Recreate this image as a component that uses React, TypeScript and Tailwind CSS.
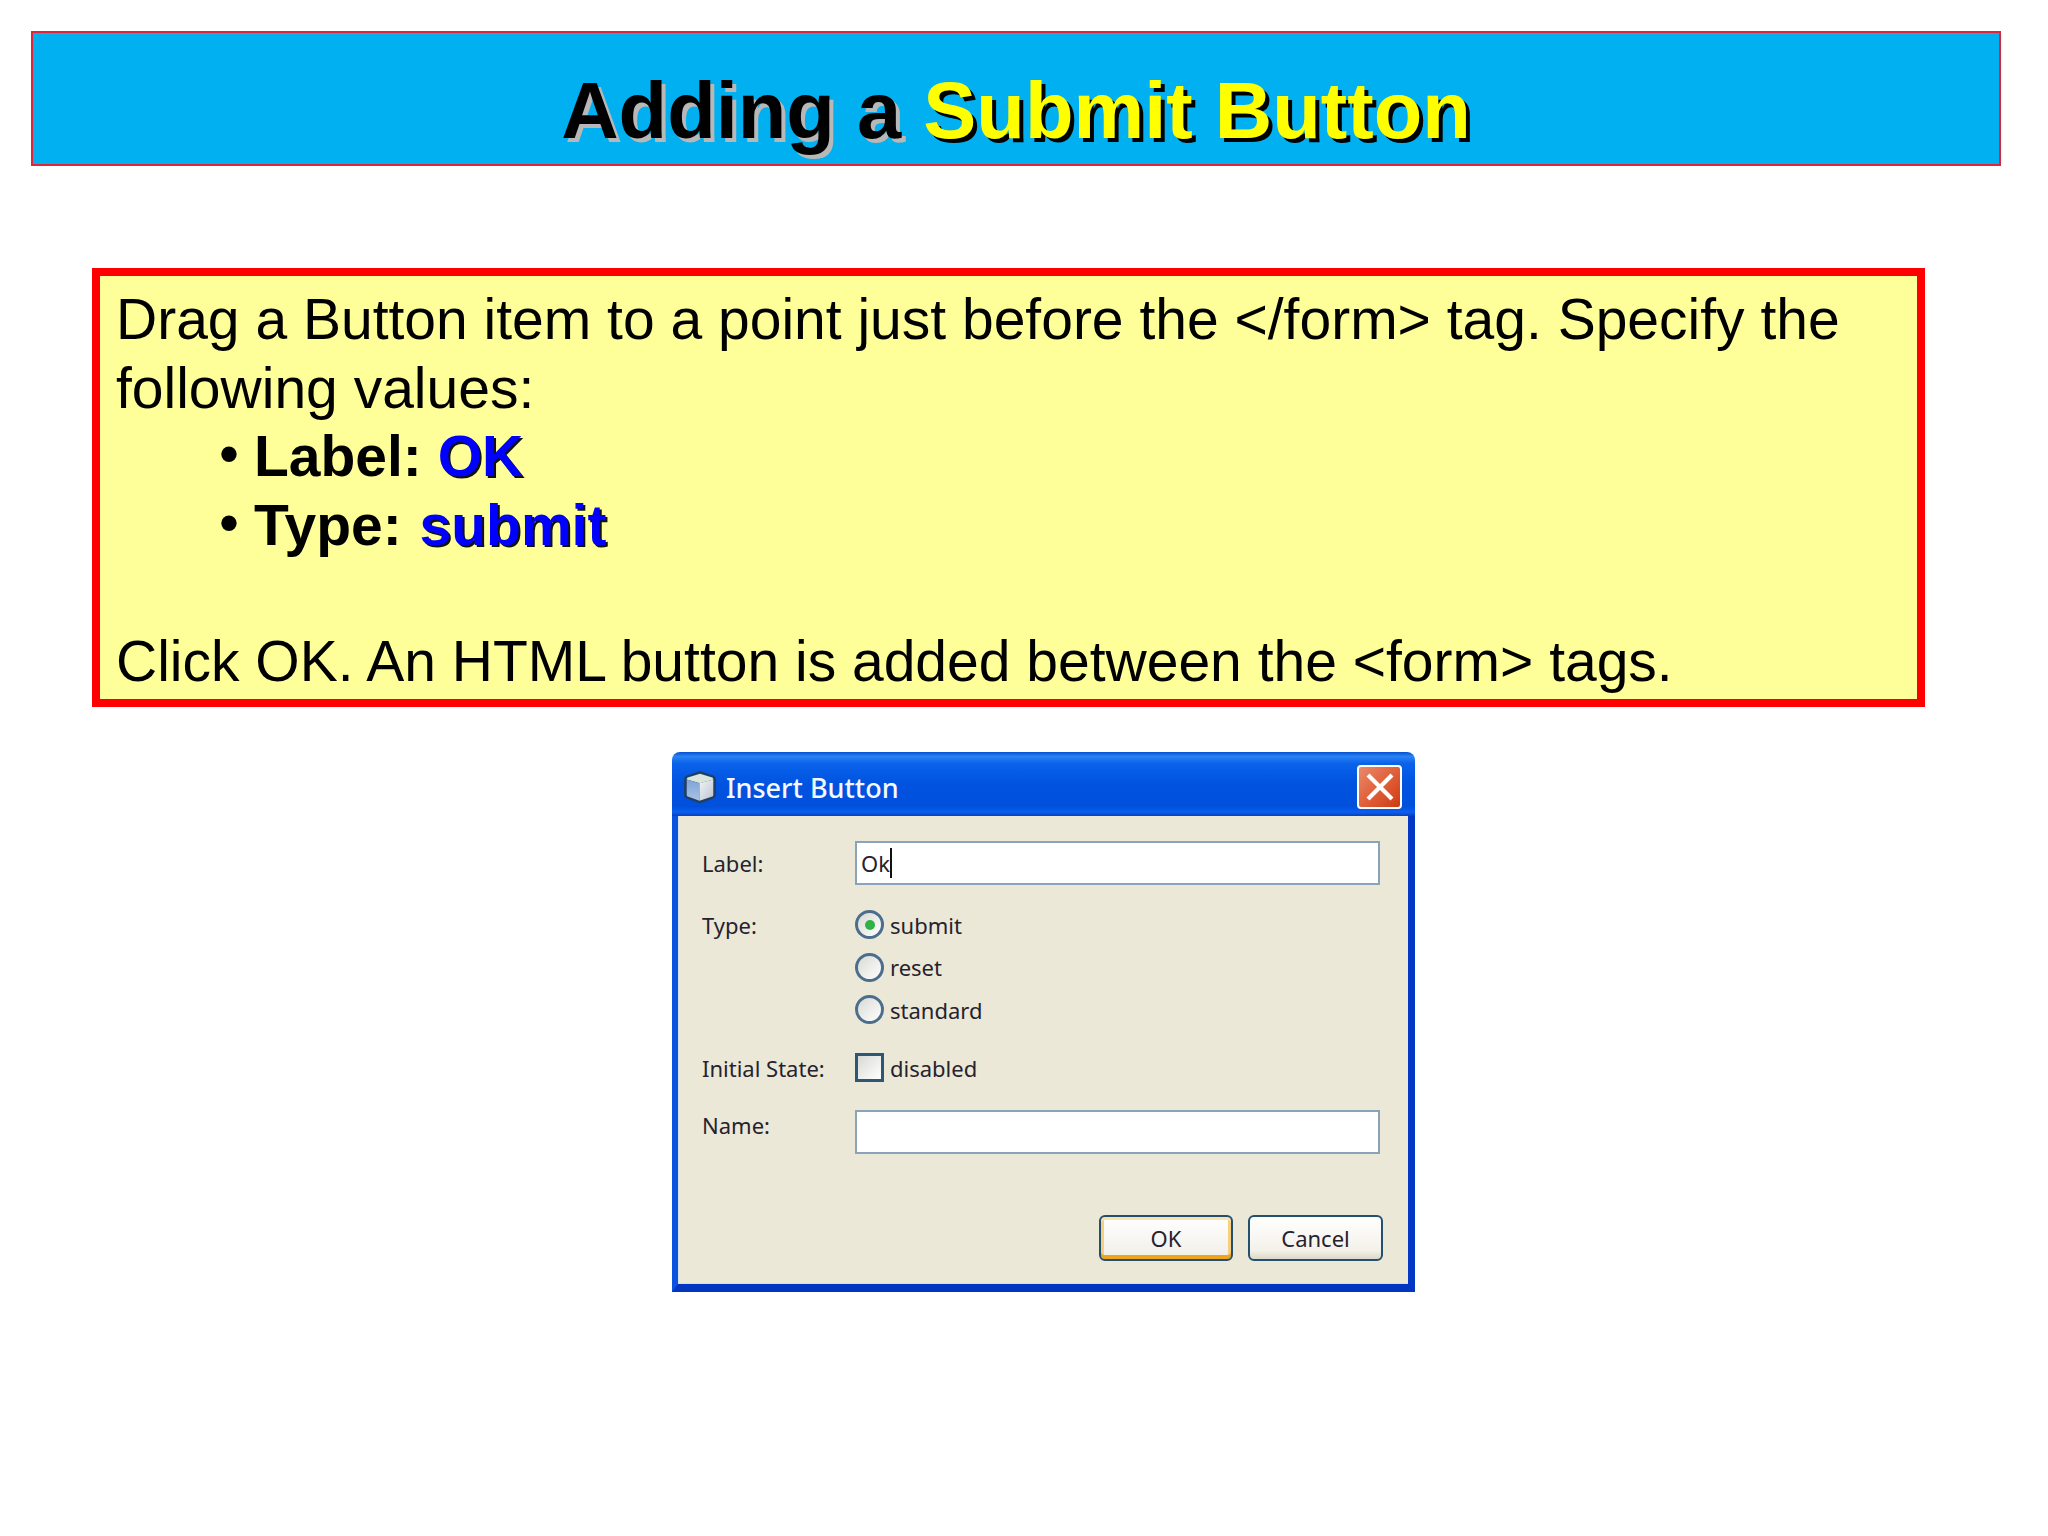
import React from "react"

const uiFont = "font-['Noto_Sans',sans-serif]"

function CubeIcon() {
  return (
    <svg viewBox="0 0 32 32" className="w-[34px] h-[34px] shrink-0">
      <defs>
        <linearGradient id="cubeLeft" x1="0" y1="0" x2="0" y2="1">
          <stop offset="0" stopColor="#7fa3d6" />
          <stop offset="1" stopColor="#a9c2e4" />
        </linearGradient>
        <linearGradient id="cubeRight" x1="0" y1="0" x2="1" y2="1">
          <stop offset="0" stopColor="#f2f4f6" />
          <stop offset="1" stopColor="#b9c4cf" />
        </linearGradient>
      </defs>
      <path d="M16 1 L28 5 Q31 6 31 9 V24 Q31 26 28 27 L16 31.5 L4 27 Q1 26 1 24 V9 Q1 6 4 5 Z" fill="#1f3f66" />
      <path d="M16 3.5 L27.5 7 Q28.5 7.5 28.5 9 L16 12.5 L3.5 9 Q3.5 7.5 4.5 7 Z" fill="#d8e6de" />
      <path d="M3.5 9 L15.5 12.5 V29 L4.5 25 Q3.5 24.5 3.5 23.5 Z" fill="url(#cubeLeft)" />
      <path d="M15.5 12.5 L28.5 9 V23.5 Q28.5 24.5 27.5 25 L15.5 29 Z" fill="url(#cubeRight)" />
    </svg>
  )
}

function CloseButton() {
  return (
    <div className="w-[45px] h-[44px] rounded-[4px] border-2 border-white bg-[linear-gradient(135deg,#e88a6c_0%,#e2643f_45%,#cf3a10_100%)] flex items-center justify-center">
      <svg viewBox="0 0 24 24" className="w-[28px] h-[28px]">
        <path d="M3 3 L21 21 M21 3 L3 21" stroke="#fff" strokeWidth="3.6" strokeLinecap="square" />
      </svg>
    </div>
  )
}

function Radio({ checked, label }: { checked?: boolean; label: string }) {
  return (
    <div className="flex items-center h-[29px] gap-[6px]">
      <div className="w-[29px] h-[29px] rounded-full border-[3px] border-[#4a6e8c] bg-[linear-gradient(135deg,#d9d9d4,#ffffff)] flex items-center justify-center">
        {checked && <div className="w-[10px] h-[10px] rounded-full bg-[#2fb344]" />}
      </div>
      <span>{label}</span>
    </div>
  )
}

function TextBox({ children }: { children?: React.ReactNode }) {
  return (
    <div className="h-[44px] border-2 border-[#8aa3b8] bg-white flex items-center pl-[4px] text-[22px]">
      {children}
    </div>
  )
}

function InsertButtonDialog() {
  return (
    <div className={`ml-[672px] mt-[45px] w-[743px] h-[540px] flex flex-col ${uiFont} text-[22px] leading-none text-[#26222e]`}>
      {/* Title bar */}
      <div className="h-[64px] shrink-0 rounded-t-[8px] flex items-center pt-[6px] pl-[11px] pr-[13px] bg-[linear-gradient(180deg,#0450d0_0%,#2a82f5_7%,#0a62ea_18%,#0053e0_50%,#0050dc_85%,#0a5ef0_94%,#0b3fb8_100%)]">
        <CubeIcon />
        <span className="ml-[9px] text-[27px] text-[#f4f8ff] font-medium flex-1">Insert Button</span>
        <CloseButton />
      </div>

      {/* Client area */}
      <div className="flex-1 border-l-[6px] border-r-[7px] border-b-[8px] border-l-[#0a52e0] border-r-[#0438c4] border-b-[#0336c0] bg-[#ebe8d8] shadow-[inset_0_-1px_0_#d5e0e6,inset_1px_0_0_#d5e0e6]">
        <div className="pt-[25px] pl-[24px] pr-[28px] grid grid-cols-[153px_1fr]">
          <div className="h-[44px] flex items-center">Label:</div>
          <TextBox>
            <span>Ok</span>
            <span className="w-[2px] h-[30px] bg-[#111]" />
          </TextBox>

          <div className="mt-[25px] h-[29px] flex items-center">Type:</div>
          <div className="mt-[25px] flex flex-col gap-[13.5px]">
            <Radio checked label="submit" />
            <Radio label="reset" />
            <Radio label="standard" />
          </div>

          <div className="mt-[29px] h-[29px] flex items-center">Initial State:</div>
          <div className="mt-[29px] flex items-center h-[29px] gap-[6px]">
            <div className="w-[29px] h-[29px] border-[3px] border-[#2e5675] bg-[linear-gradient(135deg,#d9d9d4,#ffffff)]" />
            <span>disabled</span>
          </div>

          <div className="mt-[28px] h-[29px] flex items-center">Name:</div>
          <div className="mt-[28px]">
            <TextBox />
          </div>
        </div>

        <div className="mt-[61px] mr-[25px] flex justify-end gap-[15px]">
          <div className="w-[134px] h-[46px] rounded-[6px] border-2 border-[#24506f] bg-[linear-gradient(180deg,#ffffff,#f0eee6)] shadow-[inset_0_-4px_0_#eea41c,inset_0_3px_0_#fde3ab,inset_3px_0_0_#f8cf7e,inset_-3px_0_0_#f8cf7e] flex items-center justify-center">
            OK
          </div>
          <div className="w-[135px] h-[46px] rounded-[6px] border-2 border-[#24506f] bg-[linear-gradient(180deg,#ffffff,#f3f1e9_80%,#dcd8c8)] flex items-center justify-center">
            Cancel
          </div>
        </div>
      </div>
    </div>
  )
}

export default function App() {
  return (
    <div className="w-[2048px] h-[1536px] bg-white pt-[31px] font-['Liberation_Sans',Arial,sans-serif] text-black overflow-hidden">
      {/* Slide title */}
      <div className="ml-[31px] w-[1970px] h-[135px] border-2 border-[#e0243a] bg-[#00b0f0] flex items-center justify-center">
        <h1 className="text-[79.5px] leading-none font-bold pt-[25px] [text-shadow:4px_4px_0_#b8b8b8]">
          Adding a <span className="text-[#ffff00] [text-shadow:4px_4px_0_#000]">Submit Button</span>
        </h1>
      </div>

      {/* Instructions */}
      <div className="ml-[92px] mt-[102px] w-[1833px] h-[439px] border-[8px] border-[#ff0000] bg-[#ffff99] pl-[16px] pt-[9px] text-[57px] leading-[68.5px]">
        <p>Drag a Button item to a point just before the &lt;/form&gt; tag. Specify the following values:</p>
        <div className="pl-[103px] font-bold">
          <div className="flex gap-[15px]">
            <span className="font-normal -translate-y-[3px]">•</span>
            <span>
              Label: <span className="text-[#0000ff] [text-shadow:2px_2px_0_#111]">OK</span>
            </span>
          </div>
          <div className="flex gap-[15px]">
            <span className="font-normal -translate-y-[3px]">•</span>
            <span>
              Type: <span className="ml-[2px] text-[#0000ff] [text-shadow:2px_2px_0_#111]">submit</span>
            </span>
          </div>
        </div>
        <p className="mt-[68px]">Click OK. An HTML button is added between the &lt;form&gt; tags.</p>
      </div>

      <InsertButtonDialog />
    </div>
  )
}
